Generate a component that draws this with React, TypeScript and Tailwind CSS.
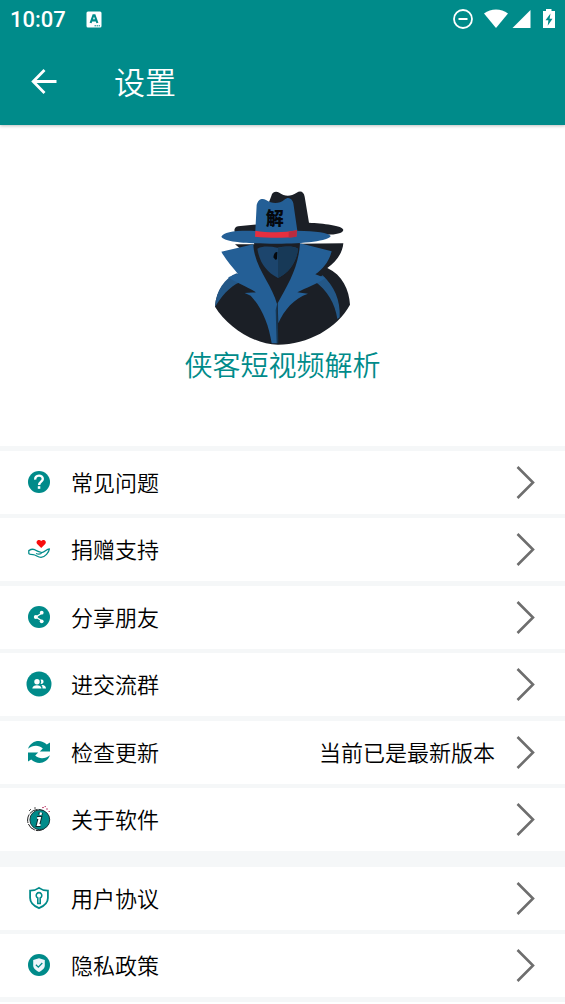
import type { ReactNode } from "react";

const TEAL = "#008b8a";

function Logo() {
  return (
    <svg viewBox="40 30 411 465" className="h-[155px] w-[137px]" role="img" aria-label="侠客">
      {/* back figure */}
      <path d="M212 48 C215 35 226 33 236 38 C252 50 270 50 288 38 C300 30 310 36 312 50 L325 128 C365 130 428 136 428 150 C426 160 405 164 380 164 L110 162 C98 158 98 142 112 139 L180 132 Z" fill="#1b1f26" />
      <path d="M103 193 L428 190 C426 220 405 246 380 264 C425 285 446 330 448 374 C410 445 320 494 232 494 C160 494 80 440 43 380 C46 330 75 295 116 278 L130 215 Z" fill="#1b1f26" />
      {/* shoulders */}
      <path d="M43 380 C46 332 72 294 108 280 L130 302 C96 312 72 335 43 380 Z" fill="#235787" />
      <path d="M340 302 L366 286 C400 318 420 360 417 412 L410 417 C404 372 380 330 340 302 Z" fill="#235787" />
      {/* face */}
      <path d="M160 186 L298 186 C298 225 280 275 232 296 C190 280 163 240 160 186 Z" fill="#1b1f26" />
      <path d="M170 206 C190 196 210 200 230 203 C250 200 275 196 292 206 C288 245 266 278 232 294 C195 275 176 245 170 206 Z" fill="#1c456d" />
      <path d="M232 203 C255 200 275 198 292 206 C288 245 266 278 232 294 Z" fill="#173957" />
      <path d="M218 232 C220 218 226 215 230 216 L229 238 L224 239 Z" fill="#05080d" />
      {/* coat collar */}
      <path d="M62 215 L158 193 C160 260 215 315 229 372 L229 490 L213 490 C205 435 184 383 150 347 L132 339 L166 337 C132 316 103 307 82 292 L112 282 C94 260 76 241 62 215 Z" fill="#245f96" />
      <path d="M298 190 L393 214 C386 243 367 267 344 283 L374 294 C350 312 315 324 290 337 L322 341 C280 355 250 390 233 430 L231 370 C264 310 294 260 298 190 Z" fill="#245f96" />
      <path d="M230 370 L233 490 L228 490 L225 390 Z" fill="#163754" />
      {/* hat */}
      <path d="M62 170 C70 157 100 151 164 153 L168 75 C172 57 185 53 196 60 C214 72 236 72 251 59 C263 48 275 55 278 70 L290 152 C345 153 385 158 390 168 C385 183 310 191 228 191 C145 191 72 187 62 170 Z" fill="#245f96" />
      <path d="M164 152 C200 158 250 159 289 151 L287 170 C250 175 200 174 163 170 Z" fill="#e62f3f" />
      <path d="M264 155 L289 151 L287 170 L264 173 Z" fill="#b92c40" />
      <text x="222" y="134" textAnchor="middle" className="text-[54px] font-black" fill="#05080d">解</text>
    </svg>
  );
}

const icons = {
  help: (
    <>
      <circle cx="13" cy="13" r="11" fill={TEAL} />
      <path d="M9.2 10.6 C9 5.4 16.8 5.4 16.8 10 C16.8 12.6 13.1 12.8 13.1 16" fill="none" stroke="#fff" strokeWidth="2.4" />
      <rect x="11.8" y="17.2" width="2.5" height="2.6" fill="#fff" />
    </>
  ),
  donate: (
    <>
      <path d="M15.2 12 L11.2 8 C9 5.2 13 2.4 15.2 5 C17.4 2.4 21.4 5.2 19.2 8 Z" fill="#f80d0d" />
      <path d="M2.8 14.6 C5.5 12.9 8.2 12.9 10.2 14.6 C12 16.2 14.8 15.4 15.8 16.6 C19.4 16.4 20.2 13 23.4 12.8 C22.8 16.6 19.2 21 15 21.4 C11.4 21.4 10.4 18.8 7 18.6 C4.6 18.6 3 18.4 2.8 17.4 Z" fill="none" stroke={TEAL} strokeWidth="1.3" strokeLinejoin="round" />
      <path d="M10 17.6 C12.4 18.4 15 18.2 15.8 16.6" fill="none" stroke={TEAL} strokeWidth="1.1" />
    </>
  ),
  share: (
    <>
      <circle cx="13" cy="13" r="11" fill={TEAL} />
      <path d="M16 9 L10 13 L16 17" fill="none" stroke="#fff" strokeWidth="1.4" />
      <circle cx="15.7" cy="8.7" r="1.9" fill="#fff" />
      <circle cx="9.8" cy="13" r="2" fill="#fff" />
      <circle cx="15.7" cy="17.3" r="1.9" fill="#fff" />
    </>
  ),
  group: (
    <>
      <circle cx="13" cy="13" r="12.5" fill={TEAL} />
      <circle cx="11" cy="10.7" r="2.7" fill="#fff" />
      <path d="M6.3 17.5 C6.3 13 15.5 13 15.5 17.5 Z" fill="#fff" />
      <path d="M14.6 8.5 A2.3 2.3 0 1 1 14.6 12.9 Q15.8 10.8 14.6 8.5 Z" fill="#fff" />
      <path d="M15.4 14 C18 13.6 20 15 20 17.5 H16.5 C16.5 15.8 16.4 14.8 15.4 14 Z" fill="#fff" />
    </>
  ),
  update: (
    <>
      <path d="M2 9.8 C5.5 1 15 0 20.8 5.6 L24 3.4 V12.6 H13.8 L16.8 9.4 C12.5 5.6 6.5 6.2 2 9.8 Z" fill={TEAL} />
      <path d="M24 16.2 C20.5 25 11 26 5.2 20.4 L2 22.6 V13.4 H12.2 L9.2 16.6 C13.5 20.4 19.5 19.8 24 16.2 Z" fill={TEAL} />
    </>
  ),
  about: (
    <>
      <circle cx="12.2" cy="14" r="10.6" fill="none" stroke="#222" strokeWidth="1" strokeDasharray="9 1" />
      <circle cx="13.8" cy="13.8" r="9.9" fill={TEAL} stroke="#17383c" strokeWidth="1" />
      <path d="M14.8 6.8 L14.3 9 M11 12 H13.8 L12 19 H14.5" fill="none" stroke="#102a2d" strokeWidth="4.2" />
      <path d="M15 6.6 L14.4 9 M11.2 12 H13.8 L12 19 H14.5" fill="none" stroke="#fff" strokeWidth="2.2" />
      <path d="M16 1.6 H18 M20 3 H22 M22.5 5.5 H24 M18.5 .6 H20" stroke="#c34f78" strokeWidth="1" />
      <path d="M3 5 L5 3 M8 2 H10" stroke="#555" strokeWidth="1" />
    </>
  ),
  agreement: (
    <>
      <path d="M13 2.9 C15.5 4.8 18.5 5.6 21.9 5.7 V13 C21.9 18.2 17.8 21.2 13 23.2 C8.2 21.2 4.1 18.2 4.1 13 V5.7 C7.5 5.6 10.5 4.8 13 2.9 Z" fill="none" stroke={TEAL} strokeWidth="1.8" />
      <path d="M11.8 13 V18.5 H14.2 V13 A2.8 2.8 0 1 0 11.8 13 Z" fill="none" stroke={TEAL} strokeWidth="1.6" />
    </>
  ),
  privacy: (
    <>
      <circle cx="13" cy="13" r="11" fill={TEAL} />
      <path d="M13 6.2 L18.8 8 V13.2 C18.8 16.4 16 18.6 13 19.9 C10 18.6 7.2 16.4 7.2 13.2 V8 Z" fill="#eef5fb" />
      <path d="M9.9 12.8 L12.3 15.1 L16.3 11" fill="none" stroke={TEAL} strokeWidth="1.3" />
    </>
  ),
};

function Row({ icon, label, note }: { icon: ReactNode; label: string; note?: string }) {
  return (
    <li className="border-b-4 border-[#f5f7f8] even:border-b-5">
      <a href="#" className="flex h-[63px] items-center bg-white pr-7 pb-0.5 pl-[26px] text-[22px] text-black">
        <svg viewBox="0 0 26 26" className="mr-[19px] size-[26px] shrink-0" aria-hidden="true">{icon}</svg>
        <span className="flex-1">{label}</span>
        {note && <span className="mr-[18px]">{note}</span>}
        <svg viewBox="0 0 24 36" className="h-9 w-6 shrink-0" aria-hidden="true">
          <path d="M4.5 3 L20 18.5 L4.5 34" fill="none" stroke="#6e6e6e" strokeWidth="2.6" />
        </svg>
      </a>
    </li>
  );
}

export default function App() {
  return (
    <div className="min-h-screen bg-white font-['Noto_Sans_CJK_SC',sans-serif] font-[350]">
      <header className="bg-[#008b8a] text-white shadow-[0_1px_3px_rgba(0,0,0,0.25)]">
        <div className="flex h-[38px] items-center pr-2 pl-[10px]">
          <span className="font-['Roboto',sans-serif] text-[22px] font-medium">10:07</span>
          <svg viewBox="0 0 16 17" className="ml-5 h-[17px] w-4" aria-hidden="true">
            <rect x=".5" y=".5" width="15" height="16" rx="1.5" fill="#fff" />
            <path d="M4.6 12 L7.4 4.2 H8.6 L11.4 12 M6 9.4 H10" fill="none" stroke={TEAL} strokeWidth="2.1" />
            <path d="M8.5 14.8 H14" stroke={TEAL} strokeWidth="1" strokeDasharray="1.5 .6" />
          </svg>
          <svg viewBox="0 0 104 22" className="ml-auto h-[22px] w-[104px]" aria-hidden="true">
            <circle cx="10" cy="11" r="9" fill="none" stroke="#fff" strokeWidth="1.8" />
            <path d="M5.5 11 H14.5" stroke="#fff" strokeWidth="2" />
            <path d="M31 5.5 C38 0 48 0 55 5.5 L43 20 Z" fill="#fff" />
            <path d="M77.5 2 V20 H59.5 Z" fill="#fff" />
            <path d="M93 1 H98.5 V3 H102 V20 H90 V3 H93 Z" fill="#fff" />
            <path d="M97.5 5.5 L92.5 12.3 H95.4 L94.7 17.7 L99.5 10.8 H96.6 Z" fill={TEAL} />
          </svg>
        </div>
        <div className="flex h-[87px] items-center pl-[30px]">
          <button type="button" aria-label="返回" className="mr-[57px]">
            <svg viewBox="0 0 27 27" className="size-[27px]" aria-hidden="true">
              <path d="M14.5 2 L3.2 13.5 L14.5 25 M3.2 13.5 H26.5" fill="none" stroke="#fff" strokeWidth="2.8" />
            </svg>
          </button>
          <h1 className="text-[31px] font-[350]">设置</h1>
        </div>
      </header>

      <main>
        <section className="flex flex-col items-center border-b-5 border-[#f5f7f8] pt-[65px] pb-[63px]">
          <Logo />
          <h2 className="text-[28px] leading-[38px] font-[350] text-[#008b8a]">侠客短视频解析</h2>
        </section>
        <ul className="border-b-11 border-[#f5f7f8]">
          <Row icon={icons.help} label="常见问题" />
          <Row icon={icons.donate} label="捐赠支持" />
          <Row icon={icons.share} label="分享朋友" />
          <Row icon={icons.group} label="进交流群" />
          <Row icon={icons.update} label="检查更新" note="当前已是最新版本" />
          <Row icon={icons.about} label="关于软件" />
        </ul>
        <ul>
          <Row icon={icons.agreement} label="用户协议" />
          <Row icon={icons.privacy} label="隐私政策" />
        </ul>
      </main>
    </div>
  );
}
